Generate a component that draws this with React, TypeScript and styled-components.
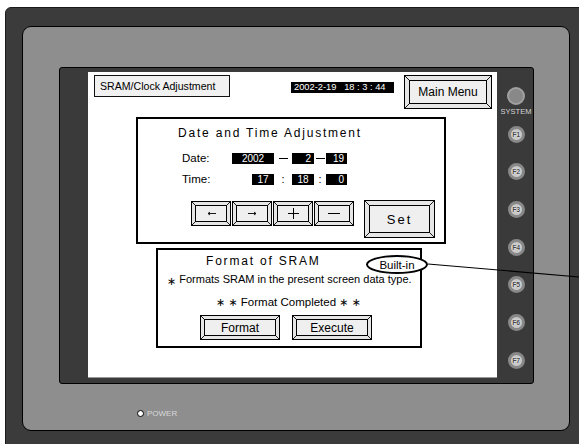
import React from "react";
import styled, { createGlobalStyle } from "styled-components";

const GlobalStyle = createGlobalStyle`
  html, body {
    margin: 0;
    padding: 0;
    background: #fff;
    overflow: hidden;
  }
  body {
    font-family: "Liberation Sans", Arial, sans-serif;
    color: #000;
  }
  * {
    box-sizing: border-box;
  }
`;

const Page = styled.div`
  position: relative;
  width: 579px;
  height: 444px;
  overflow: hidden;
  padding: 7px 0 0 5px;
`;

/* outer housing */
const Frame = styled.div`
  width: 600px;
  height: 460px;
  background: #3b3b3b;
  border: 1px solid #1a1a1a;
  border-radius: 6px;
  padding: 18px 0 0 16px;
`;

const Bezel = styled.div`
  width: 548px;
  height: 405px;
  background: #8e8e8e;
  border: 1px solid #000;
  border-radius: 9px;
  padding: 40px 0 0 36px;
`;

const DisplayUnit = styled.div`
  display: flex;
  width: 475px;
  height: 317px;
  background: #3a3a3a;
  border: 1px solid #000;
  border-radius: 3px;
  padding: 4px 0 0 28px;
`;

const Screen = styled.div`
  display: flex;
  flex-direction: column;
  width: 409px;
  height: 306px;
  background: #fff;
  border-bottom: 1px solid #9a9a9a;
  padding: 3px 0 0 6px;
`;

/* function keys on the right */
const KeyColumn = styled.div`
  display: flex;
  flex-direction: column;
  align-items: center;
  width: 36px;
  padding: 15px 0 0 2px;
`;

const SystemKey = styled.div`
  width: 18px;
  height: 18px;
  border-radius: 50%;
  background: #888;
  border: 2px solid #a0a0a0;
`;

const SystemLabel = styled.div`
  margin-top: 2px;
  font-size: 7.5px;
  line-height: 9px;
  color: #d6d6d6;
`;

const FKeyList = styled.div`
  display: flex;
  flex-direction: column;
  gap: 20.7px;
  margin-top: 9.5px;
`;

const FKey = styled.div`
  display: flex;
  align-items: center;
  justify-content: center;
  width: 17px;
  height: 17px;
  border-radius: 50%;
  background: #c9c9c9;
  border: 3px solid #888;
  font-size: 7px;
  font-weight: bold;
  color: #4a4a4a;
  text-shadow: 0 0 1px #fff, 0 0 1px #fff;
  letter-spacing: -0.4px;
`;

const PowerRow = styled.div`
  display: flex;
  align-items: center;
  gap: 3px;
  margin: 25px 0 0 78px;
`;

const PowerLed = styled.div`
  width: 7px;
  height: 7px;
  border-radius: 50%;
  background: #fff;
  border: 1px solid #000;
`;

const PowerLabel = styled.span`
  font-size: 8px;
  color: #d8d8d8;
`;

/* screen contents */
const Header = styled.div`
  display: flex;
  align-items: flex-start;
`;

const TitleBox = styled.div`
  display: flex;
  align-items: center;
  width: 136px;
  height: 22px;
  padding-left: 5px;
  background: #f1f1f1;
  border: 1.5px solid #111;
  font-size: 10.6px;
`;

const Clock = styled.div`
  width: 103px;
  height: 11px;
  margin: 7px 0 0 61px;
  padding-left: 3px;
  background: #000;
  color: #fff;
  font-size: 9.3px;
  line-height: 11px;
  white-space: pre;
`;

const BevelWrap = styled.div<{ $w: number; $h: number; $inset: number }>`
  position: relative;
  display: flex;
  width: ${(p) => p.$w}px;
  height: ${(p) => p.$h}px;
  padding: ${(p) => p.$inset}px;
  background: #e6e6e6;
  border: 1px solid #000;
`;

const BevelFace = styled.div<{ $size: number; $spacing: number }>`
  flex: 1;
  display: flex;
  align-items: center;
  justify-content: center;
  background: #efefef;
  border: 1px solid #000;
  font-size: ${(p) => p.$size}px;
  letter-spacing: ${(p) => p.$spacing}px;
`;

const BevelLines = styled.svg`
  position: absolute;
  left: -1px;
  top: -1px;
  pointer-events: none;
`;

type BevelProps = {
  w: number;
  h: number;
  inset?: number;
  size?: number;
  spacing?: number;
  style?: React.CSSProperties;
  children?: React.ReactNode;
};

const BevelButton = ({ w, h, inset = 3, size = 12, spacing = 0, style, children }: BevelProps) => {
  const i = inset + 1;
  return (
    <BevelWrap $w={w} $h={h} $inset={inset} style={style}>
      <BevelFace $size={size} $spacing={spacing}>{children}</BevelFace>
      <BevelLines width={w} height={h}>
        <g stroke="#000" strokeWidth="0.9">
          <line x1="0.5" y1="0.5" x2={i} y2={i} />
          <line x1={w - 0.5} y1="0.5" x2={w - i} y2={i} />
          <line x1="0.5" y1={h - 0.5} x2={i} y2={h - i} />
          <line x1={w - 0.5} y1={h - 0.5} x2={w - i} y2={h - i} />
        </g>
      </BevelLines>
    </BevelWrap>
  );
};

const DateBox = styled.div`
  width: 310.5px;
  height: 127px;
  margin: 8px 0 0 41.5px;
  padding: 7px 0 0 40.5px;
  border: 2px solid #000;
`;

const SpacedTitle = styled.div`
  font-size: 12px;
  line-height: 14px;
  letter-spacing: 1.8px;
`;

const FieldGrid = styled.div`
  display: grid;
  grid-template-columns: 50px 42px 18px 22px 12px 21px;
  grid-auto-rows: 11px;
  row-gap: 10px;
  align-items: center;
  margin: 13px 0 0 4px;
`;

const FieldLabel = styled.span`
  font-size: 11.5px;
  line-height: 11px;
`;

const Value = styled.span<{ $w: number; $align?: string }>`
  justify-self: end;
  width: ${(p) => p.$w}px;
  height: 11px;
  padding: 0 3px;
  background: #000;
  color: #fff;
  font-size: 10px;
  line-height: 11px;
  text-align: ${(p) => p.$align || "right"};
`;

const Sep = styled.span`
  display: flex;
  justify-content: center;
  align-items: center;
  font-size: 11px;
  line-height: 11px;
`;

const Dash = styled.span`
  width: 9px;
  height: 1.5px;
  background: #000;
`;

const KeyRow = styled.div`
  display: flex;
  align-items: flex-start;
  gap: 10px;
  margin: 16px 0 0 13px;
`;

const ArrowGroup = styled.div`
  display: flex;
  gap: 1px;
`;

const FormatBox = styled.div`
  position: relative;
  width: 266.5px;
  height: 100px;
  margin: 4px 0 0 61.5px;
  border: 2px solid #000;
`;

const FormatTitle = styled(SpacedTitle)`
  margin: 4px 0 0 48.5px;
`;

const Callout = styled.div`
  position: absolute;
  left: 208.5px;
  top: 5px;
  display: flex;
  align-items: center;
  justify-content: center;
  width: 62px;
  height: 19px;
  border: 2px solid #000;
  border-radius: 50%;
  background: #fff;
  font-size: 11.5px;
`;

const Note = styled.div`
  margin: 4px 0 0 9.5px;
  font-size: 11px;
  line-height: 14px;
  white-space: nowrap;
`;

const Star = styled.span<{ $low?: boolean }>`
  font-family: "DejaVu Sans", sans-serif;
  font-size: 11px;
  position: relative;
  top: ${(p) => (p.$low ? 2 : 0)}px;
`;

const Completed = styled.div`
  margin: 8px 0 0 58.5px;
  font-size: 11.5px;
  line-height: 14px;
  white-space: pre;
`;

const ActionRow = styled.div`
  display: flex;
  gap: 12px;
  margin: 5px 0 0 42.5px;
`;

const LeaderLine = styled.svg`
  position: absolute;
  left: 0;
  top: 0;
  pointer-events: none;
`;

const ArrowIcon = ({ dir }: { dir: "left" | "right" }) => (
  <svg width="9" height="5" viewBox="0 0 9 5">
    {dir === "left" ? (
      <path d="M1 2.5H9M1 2.5L3 1M1 2.5L3 4" stroke="#000" strokeWidth="0.9" fill="none" />
    ) : (
      <path d="M0 2.5H8M8 2.5L6 1M8 2.5L6 4" stroke="#000" strokeWidth="0.9" fill="none" />
    )}
  </svg>
);

const PlusIcon = () => (
  <svg width="11" height="11" viewBox="0 0 11 11">
    <path d="M5.5 0V11M0 5.5H11" stroke="#000" strokeWidth="1" />
  </svg>
);

const MinusIcon = () => (
  <svg width="12" height="3" viewBox="0 0 12 3">
    <path d="M0 1.5H12" stroke="#000" strokeWidth="1" />
  </svg>
);

const fKeys = ["F1", "F2", "F3", "F4", "F5", "F6", "F7"];

export default function App() {
  return (
    <>
      <GlobalStyle />
      <Page>
        <Frame>
          <Bezel>
            <DisplayUnit>
              <Screen>
                <Header>
                  <TitleBox>SRAM/Clock Adjustment</TitleBox>
                  <Clock>{"2002-2-19   18 : 3 : 44"}</Clock>
                  <BevelButton w={88} h={34} inset={4} size={12} style={{ marginLeft: 10 }}>
                    Main Menu
                  </BevelButton>
                </Header>

                <DateBox>
                  <SpacedTitle>Date and Time Adjustment</SpacedTitle>
                  <FieldGrid>
                    <FieldLabel>Date:</FieldLabel>
                    <Value $w={42} $align="center">2002</Value>
                    <Sep><Dash /></Sep>
                    <Value $w={22}>2</Value>
                    <Sep><Dash /></Sep>
                    <Value $w={21}>19</Value>

                    <FieldLabel>Time:</FieldLabel>
                    <Value $w={22} $align="center">17</Value>
                    <Sep>:</Sep>
                    <Value $w={22} $align="center">18</Value>
                    <Sep>:</Sep>
                    <Value $w={21}>0</Value>
                  </FieldGrid>
                  <KeyRow>
                    <ArrowGroup>
                      <BevelButton w={40} h={25}><ArrowIcon dir="left" /></BevelButton>
                      <BevelButton w={40} h={25}><ArrowIcon dir="right" /></BevelButton>
                      <BevelButton w={40} h={25}><PlusIcon /></BevelButton>
                      <BevelButton w={40} h={25}><MinusIcon /></BevelButton>
                    </ArrowGroup>
                    <BevelButton w={71} h={38} inset={4} size={13} spacing={2} style={{ marginTop: -1 }}>
                      Set
                    </BevelButton>
                  </KeyRow>
                </DateBox>

                <FormatBox>
                  <FormatTitle>Format of SRAM</FormatTitle>
                  <Callout>Built-in</Callout>
                  <Note>
                    <Star $low>∗</Star> Formats SRAM in the present screen data type.
                  </Note>
                  <Completed>
                    <Star>∗</Star> <Star>∗</Star> Format Completed <Star>∗</Star> <Star>∗</Star>
                  </Completed>
                  <ActionRow>
                    <BevelButton w={80} h={25} size={12}>Format</BevelButton>
                    <BevelButton w={80} h={25} size={12}>Execute</BevelButton>
                  </ActionRow>
                </FormatBox>
              </Screen>

              <KeyColumn>
                <SystemKey />
                <SystemLabel>SYSTEM</SystemLabel>
                <FKeyList>
                  {fKeys.map((k) => (
                    <FKey key={k}>{k}</FKey>
                  ))}
                </FKeyList>
              </KeyColumn>
            </DisplayUnit>

            <PowerRow>
              <PowerLed />
              <PowerLabel>POWER</PowerLabel>
            </PowerRow>
          </Bezel>
        </Frame>

        <LeaderLine width={579} height={444}>
          <line x1="428" y1="264" x2="579" y2="277" stroke="#000" strokeWidth="1.1" />
        </LeaderLine>
      </Page>
    </>
  );
}
